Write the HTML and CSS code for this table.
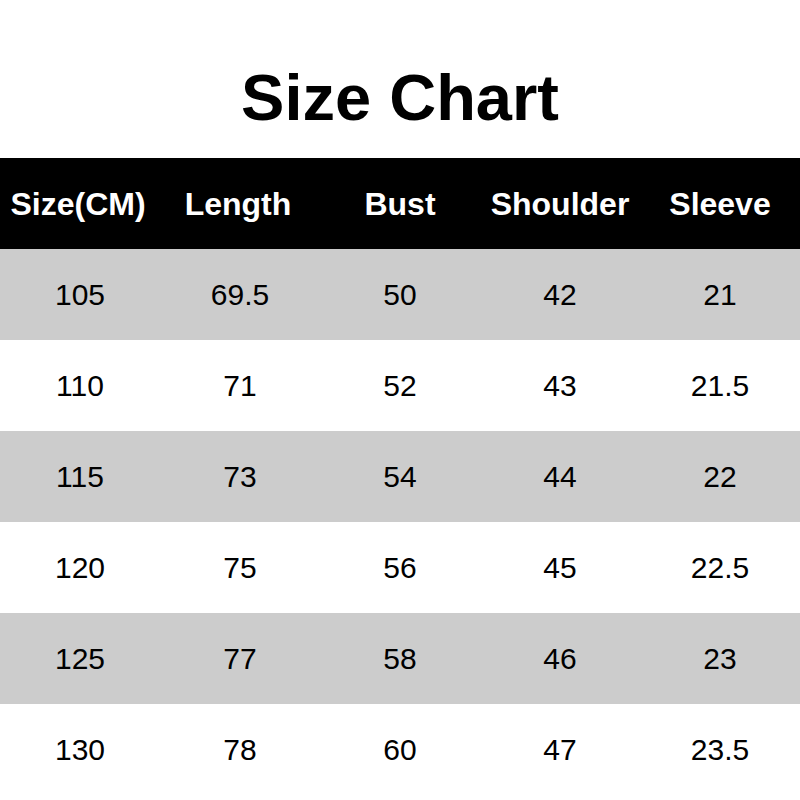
FILE: index.html
```html
<!DOCTYPE html>
<html>
<head>
<meta charset="utf-8">
<link rel="stylesheet" href="styles.css">
</head>
<body>
<div class="page">
  <h1 class="title">Size Chart</h1>
  <div class="table">
    <div class="row head"><div>Size(CM)</div><div>Length</div><div>Bust</div><div>Shoulder</div><div>Sleeve</div></div>
    <div class="row gray"><div>105</div><div>69.5</div><div>50</div><div>42</div><div>21</div></div>
    <div class="row"><div>110</div><div>71</div><div>52</div><div>43</div><div>21.5</div></div>
    <div class="row gray"><div>115</div><div>73</div><div>54</div><div>44</div><div>22</div></div>
    <div class="row"><div>120</div><div>75</div><div>56</div><div>45</div><div>22.5</div></div>
    <div class="row gray"><div>125</div><div>77</div><div>58</div><div>46</div><div>23</div></div>
    <div class="row"><div>130</div><div>78</div><div>60</div><div>47</div><div>23.5</div></div>
  </div>
</div>
</body>
</html>
```
FILE: styles.css
```css
html, body {
  margin: 0;
  padding: 0;
  background: #ffffff;
}
.page {
  width: 800px;
  height: 800px;
  font-family: "Liberation Sans", Arial, sans-serif;
  color: #000000;
}
.title {
  margin: 0;
  padding: 66px 0 28px;
  height: 64px;
  line-height: 64px;
  font-size: 65px;
  font-weight: bold;
  text-align: center;
}
.row {
  display: grid;
  grid-template-columns: repeat(5, 160px);
  height: 91px;
  line-height: 91px;
  font-size: 30px;
  text-align: center;
}
.row.gray {
  background: #cccccc;
}
.row.head {
  background: #000000;
  color: #ffffff;
  font-weight: bold;
  font-size: 32px;
  line-height: 93px;
}
.row.head > div:first-child {
  margin-left: -2px;
  margin-right: 2px;
}
.row.head > div:nth-child(2) {
  margin-left: -2px;
  margin-right: 2px;
}
```
